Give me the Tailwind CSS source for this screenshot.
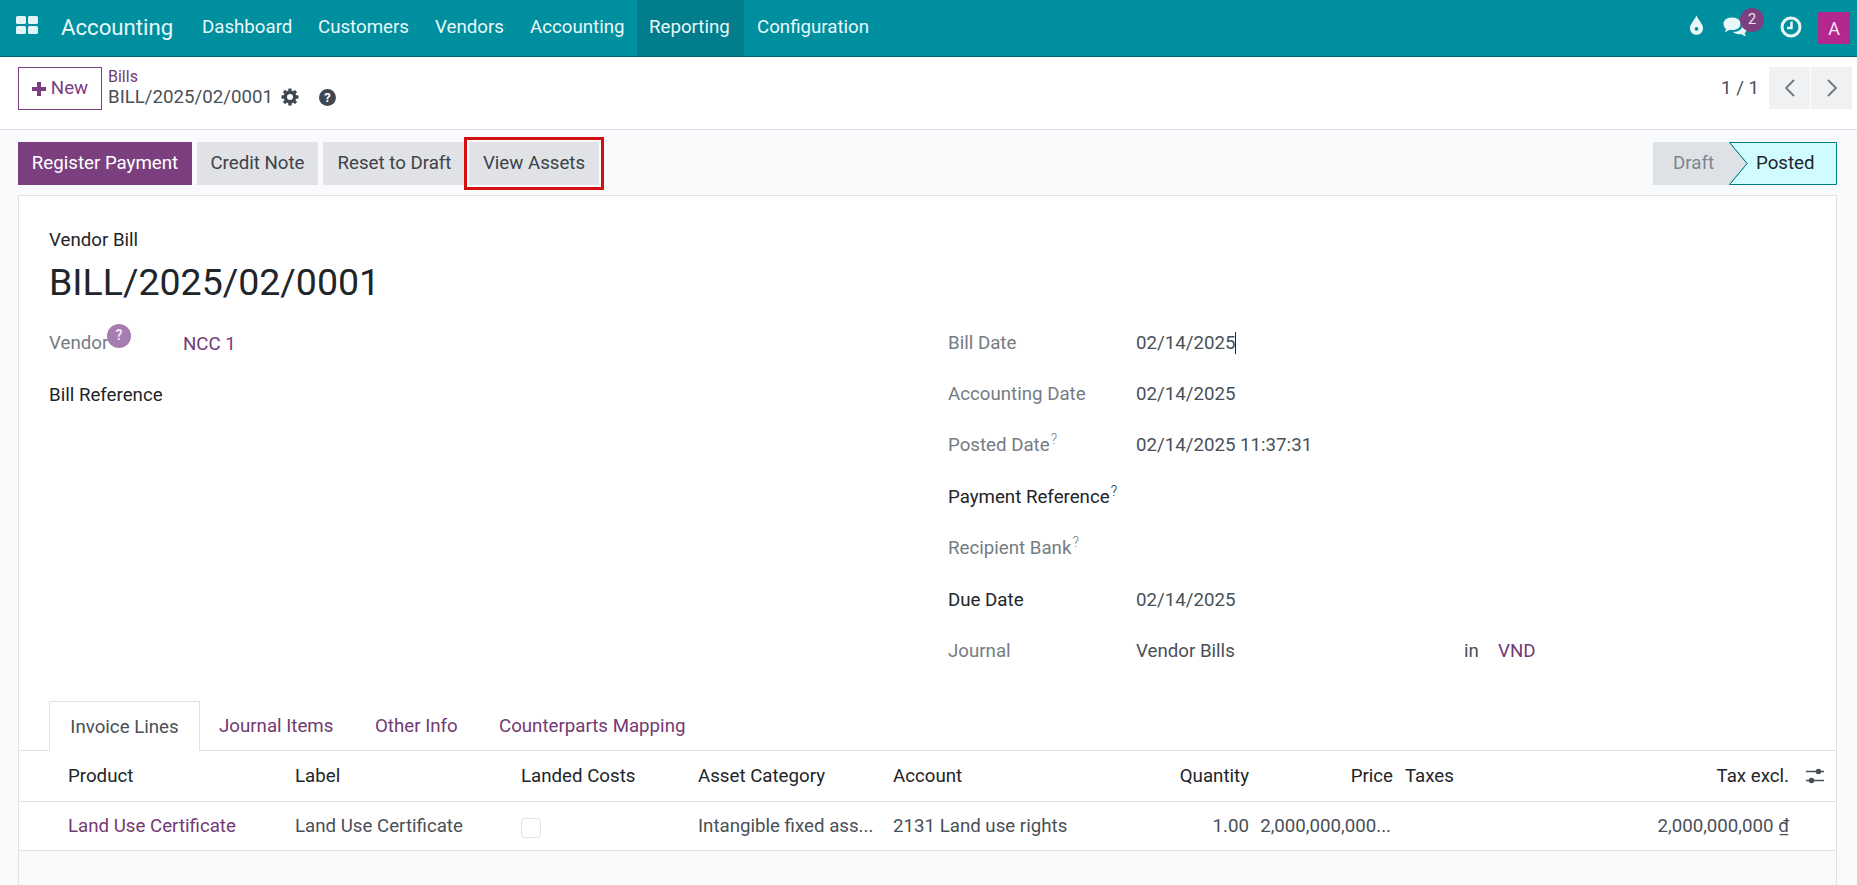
<!DOCTYPE html>
<html lang="en">
<head>
  <meta charset="UTF-8" />
  <title>Vendor Bill - BILL/2025/02/0001</title>
  <script src="https://cdn.jsdelivr.net/npm/@tailwindcss/browser@4"></script>
</head>
<body class="h-[885px] w-[1857px] overflow-hidden bg-[#f9fafb] font-['Roboto',sans-serif] text-[18.7px] text-[#495057]">

<!-- Top navbar -->
<header class="flex h-[57px] items-stretch border-b border-[#00616b] bg-[#008f9f] text-[#e8f8fa]">
  <div class="flex w-[61px] items-center pl-[16px]">
    <svg width="22" height="18" viewBox="0 0 22 18" fill="#e3f4f6" class="mb-[6px]">
      <rect x="0" y="0" width="10" height="8" rx="1.500"/><rect x="12" y="0" width="10" height="8" rx="1.500"/>
      <rect x="0" y="10" width="10" height="8" rx="1.500"/><rect x="12" y="10" width="10" height="8" rx="1.500"/>
    </svg>
  </div>
  <div class="flex w-[141px] items-center pb-[1px] text-[22.2px]">Accounting</div>
  <nav class="flex items-stretch pb-[2px]">
    <a class="flex w-[116px] items-center">Dashboard</a>
    <a class="flex w-[117px] items-center">Customers</a>
    <a class="flex w-[95px] items-center">Vendors</a>
    <a class="flex w-[107px] items-center">Accounting</a>
    <a class="mb-[-2px] flex w-[107px] items-center bg-[#017d8b] pb-[2px] pl-[12px]">Reporting</a>
    <a class="flex items-center pl-[13px]">Configuration</a>
  </nav>
  <div class="relative ml-auto flex items-center">
    <svg width="15" height="20" viewBox="0 0 16 21" class="absolute left-[-129px] top-[15px]"><path fill="#eaf7f8" fill-rule="evenodd" d="M8 0C9 4 15 9 15 14a7 7 0 0 1-14 0C1 9 7 4 8 0Zm0 12.500a2 2 0 1 0 0 4 2 2 0 0 0 0-4Z"/></svg>
    <svg width="26" height="24" viewBox="0 0 26 24" class="absolute left-[-96px] top-[15px]" fill="#eaf7f8">
      <path d="M21 8.500c2.500 1.200 4 3 4 5.200 0 1.700-.9 3.200-2.400 4.300.2 1.200.9 2.300 1.800 3.200-2-.3-3.800-1.100-5.100-2.200-.7.100-1.400.2-2.200.2-2.500 0-4.700-.8-6.100-2.100 5.800-.1 10.200-3.400 10-8.300Z"/>
      <path stroke="#008f9f" d="M10 2c5.200 0 9 3 9 6.800s-3.800 6.800-9 6.800c-.9 0-1.700-.1-2.500-.3C6 16.500 4 17.400 1.600 17.800c1-1 1.700-2.200 2-3.700C2 12.900 1 11 1 8.800 1 5 4.800 2 10 2Z"/>
    </svg>
    <span class="absolute left-[-78px] top-[8px] flex h-[24px] w-[24px] items-center justify-center rounded-full bg-[#7c3f80] text-[14.5px] text-[#f2e6f2]">2</span>
    <svg width="22" height="22" viewBox="0 0 22 22" class="absolute left-[-38px] top-[16px]" fill="none" stroke="#eaf7f8"><circle cx="11" cy="11" r="9" stroke-width="3"/><path d="M11.500 5.500v6.500H7" stroke-width="2.500"/></svg>
    <span class="mr-[7px] flex h-[32px] w-[32px] items-center justify-center rounded-[2px] bg-[#b3278f] text-[18px] text-[#f8e6f3]">A</span>
  </div>
</header>

<!-- Control panel -->
<section class="flex h-[73px] items-start border-b border-[#dee2e6] bg-white">
  <button class="ml-[18px] mt-[10px] flex h-[43px] w-[84px] items-center justify-center gap-[5px] border border-[#7b3f80] text-[#7b3f80]">
    <svg width="14" height="14" viewBox="0 0 14 14" fill="#7b3f80"><path d="M5 0h4v5h5v4H9v5H5V9H0V5h5Z"/></svg>
    New
  </button>
  <div class="ml-[6px] mt-[12px]">
    <a class="block text-[16px] leading-[15px] text-[#733a73]">Bills</a>
    <div class="flex items-center leading-[26px]">
      <span>BILL/2025/02/0001</span>
      <svg width="18" height="18" viewBox="0 0 18 18" class="ml-[8px]" fill="#3f4750">
        <circle cx="9" cy="9" r="4.800" fill="none" stroke="#3f4750" stroke-width="3.200"/>
        <g><rect x="7.300" y="0.500" width="3.400" height="17" rx=".6"/><rect x="7.300" y="0.500" width="3.400" height="17" rx=".6" transform="rotate(45 9 9)"/><rect x="7.300" y="0.500" width="3.400" height="17" rx=".6" transform="rotate(90 9 9)"/><rect x="7.300" y="0.500" width="3.400" height="17" rx=".6" transform="rotate(135 9 9)"/></g>
        <circle cx="9" cy="9" r="3" fill="#fff"/>
      </svg>
      <span class="ml-[20px] flex h-[17px] w-[17px] items-center justify-center rounded-full bg-[#3f4750] text-[13px] font-bold leading-none text-white">?</span>
    </div>
  </div>
  <div class="ml-auto mr-[5px] mt-[10px] flex items-center">
    <span class="mr-[10px]">1 / 1</span>
    <button class="mr-[1px] flex h-[42px] w-[41px] items-center justify-center bg-[#f0f1f2]">
      <svg width="14" height="20" viewBox="0 0 14 20" fill="none" stroke="#6c757d" stroke-width="1.800"><path d="M11 2 3 10l8 8"/></svg>
    </button>
    <button class="flex h-[42px] w-[41px] items-center justify-center bg-[#f0f1f2]">
      <svg width="14" height="20" viewBox="0 0 14 20" fill="none" stroke="#6c757d" stroke-width="1.800"><path d="m3 2 8 8-8 8"/></svg>
    </button>
  </div>
</section>

<!-- Status bar -->
<section class="flex h-[65px] items-start justify-between pl-[18px] pr-[20px] pt-[12px]">
  <div class="flex h-[43px]">
    <button class="w-[174px] bg-[#7b3f80] text-white">Register Payment</button>
    <button class="ml-[5px] w-[121px] bg-[#e0e2e6] text-[#3d4349]">Credit Note</button>
    <button class="ml-[5px] w-[143px] bg-[#e0e2e6] text-[#3d4349]">Reset to Draft</button>
    <button class="ml-[3px] w-[130px] bg-[#e0e2e6] text-[#3d4349] outline-[3px] outline-offset-2 outline-[#d40f12]">View Assets</button>
  </div>
  <div class="flex h-[43px]">
    <div class="flex w-[76px] items-center bg-[#dee2e6] pl-[20px] text-[#7d858c]">Draft</div>
    <div class="relative flex w-[108px] items-center pl-[27px] text-[#212529]">
      <svg width="108" height="43" viewBox="0 0 108 43" class="absolute left-0 top-0"><path d="M0.500 0.500H107.500V42.500H0.500L18 21.500Z" fill="#d0fbff" stroke="#017e84"/><path d="M0 0 18 21.500 0 43Z" fill="#dee2e6"/><path d="M0.500 0.500 18 21.500 0.500 42.500" fill="none" stroke="#017e84"/></svg>
      <span class="relative">Posted</span>
    </div>
  </div>
</section>

<!-- Form sheet -->
<main class="ml-[18px] mr-[20px] flex h-[690px] flex-col border border-b-0 border-[#dee2e6] bg-white">
  <div class="px-[30px] pt-[32px]">
    <div class="leading-[24px] text-[#212529]">Vendor Bill</div>
    <h1 class="mt-[5px] text-[37.5px] leading-[50px] text-[#212529]">BILL/2025/02/0001</h1>
  </div>

  <div class="mt-[10px] flex px-[30px]">
    <!-- left group -->
    <div class="w-[899px]">
      <div class="flex h-[52px] items-center">
        <span class="relative flex w-[134px] text-[#757c83]">Vendor
          <span class="absolute left-[58px] top-[-5px] flex h-[24px] w-[24px] items-center justify-center rounded-full bg-[#a67db0] text-[14px] font-bold text-[#eee3f0]">?</span>
        </span>
        <a class="pt-[3px] text-[#733a73]">NCC 1</a>
      </div>
      <div class="flex h-[52px] items-center text-[#212529]">Bill Reference</div>
    </div>
    <!-- right group -->
    <div class="grid flex-1 grid-cols-[188px_1fr] auto-rows-[51.3px] items-center">
      <span class="text-[#757c83]">Bill Date</span>
      <span class="flex items-center">02/14/2025<i class="h-[22px] w-px bg-[#212529]"></i></span>
      <span class="text-[#757c83]">Accounting Date</span>
      <span>02/14/2025</span>
      <span class="text-[#757c83]">Posted Date<sup class="ml-[1px] text-[14px] font-light">?</sup></span>
      <span>02/14/2025 11:37:31</span>
      <span class="text-[#212529]">Payment Reference<sup class="ml-[1px] text-[14px] font-light">?</sup></span>
      <span></span>
      <span class="text-[#757c83]">Recipient Bank<sup class="ml-[1px] text-[14px] font-light">?</sup></span>
      <span></span>
      <span class="translate-y-[1px] text-[#212529]">Due Date</span>
      <span class="translate-y-[1px]">02/14/2025</span>
      <span class="translate-y-[1px] text-[#757c83]">Journal</span>
      <span class="flex translate-y-[1px]">
        <span class="w-[328px]">Vendor Bills</span>
        <span class="w-[34px]">in</span>
        <a class="text-[#733a73]">VND</a>
      </span>
    </div>
  </div>

  <!-- Tabs -->
  <div class="mt-[25px] flex h-[50px] shrink-0 items-stretch border-b border-[#dee2e6] pl-[30px]">
    <a class="mb-[-1px] flex w-[151px] items-center justify-center border border-b-0 border-[#dee2e6] bg-white">Invoice Lines</a>
    <a class="flex w-[175px] items-center pl-[19px] text-[#733a73]">Journal Items</a>
    <a class="flex w-[124px] items-center text-[#733a73]">Other Info</a>
    <a class="flex items-center text-[#733a73]">Counterparts Mapping</a>
  </div>

  <!-- Invoice lines table -->
  <div class="grid grid-cols-[276px_226px_177px_195px_200px_156px_144px_12px_96px_288px_1fr]">
    <div class="contents text-[#212529]">
      <div class="flex h-[51px] items-center border-b border-[#dee2e6] pl-[49px]">Product</div>
      <div class="flex items-center border-b border-[#dee2e6]">Label</div>
      <div class="flex items-center border-b border-[#dee2e6]">Landed Costs</div>
      <div class="flex items-center border-b border-[#dee2e6]">Asset Category</div>
      <div class="flex items-center border-b border-[#dee2e6]">Account</div>
      <div class="flex items-center justify-end border-b border-[#dee2e6]">Quantity</div>
      <div class="flex items-center justify-end border-b border-[#dee2e6]">Price</div>
      <div class="border-b border-[#dee2e6]"></div>
      <div class="flex items-center border-b border-[#dee2e6]">Taxes</div>
      <div class="flex items-center justify-end border-b border-[#dee2e6]">Tax excl.</div>
      <div class="flex items-center justify-center border-b border-[#dee2e6]">
        <svg width="18" height="18" viewBox="0 0 18 18" stroke="#495057" fill="#495057" class="ml-[4px]"><path d="M0 4.500h18M0 13.500h18" stroke-width="1.300"/><circle cx="12.500" cy="4.500" r="2.800" stroke="none"/><circle cx="5.500" cy="13.500" r="2.800" stroke="none"/></svg>
      </div>
    </div>
    <div class="contents">
      <div class="flex h-[49px] items-center border-b border-[#dee2e6] pl-[49px] text-[#733a73]">Land Use Certificate</div>
      <div class="flex items-center border-b border-[#dee2e6]">Land Use Certificate</div>
      <div class="flex items-center border-b border-[#dee2e6]"><i class="mt-[3px] h-[20px] w-[20px] rounded-[4px] border border-[#dee2e6] bg-white"></i></div>
      <div class="flex items-center border-b border-[#dee2e6]">Intangible fixed ass...</div>
      <div class="flex items-center border-b border-[#dee2e6]">2131 Land use rights</div>
      <div class="flex items-center justify-end border-b border-[#dee2e6]">1.00</div>
      <div class="flex items-center justify-end whitespace-nowrap border-b border-[#dee2e6] pr-[2px]">2,000,000,000...</div>
      <div class="border-b border-[#dee2e6]"></div>
      <div class="border-b border-[#dee2e6]"></div>
      <div class="flex items-center justify-end whitespace-nowrap border-b border-[#dee2e6]">2,000,000,000 ₫</div>
      <div class="border-b border-[#dee2e6]"></div>
    </div>
  </div>
  <div class="flex-1 bg-[#fafafa]"></div>
</main>

</body>
</html>
